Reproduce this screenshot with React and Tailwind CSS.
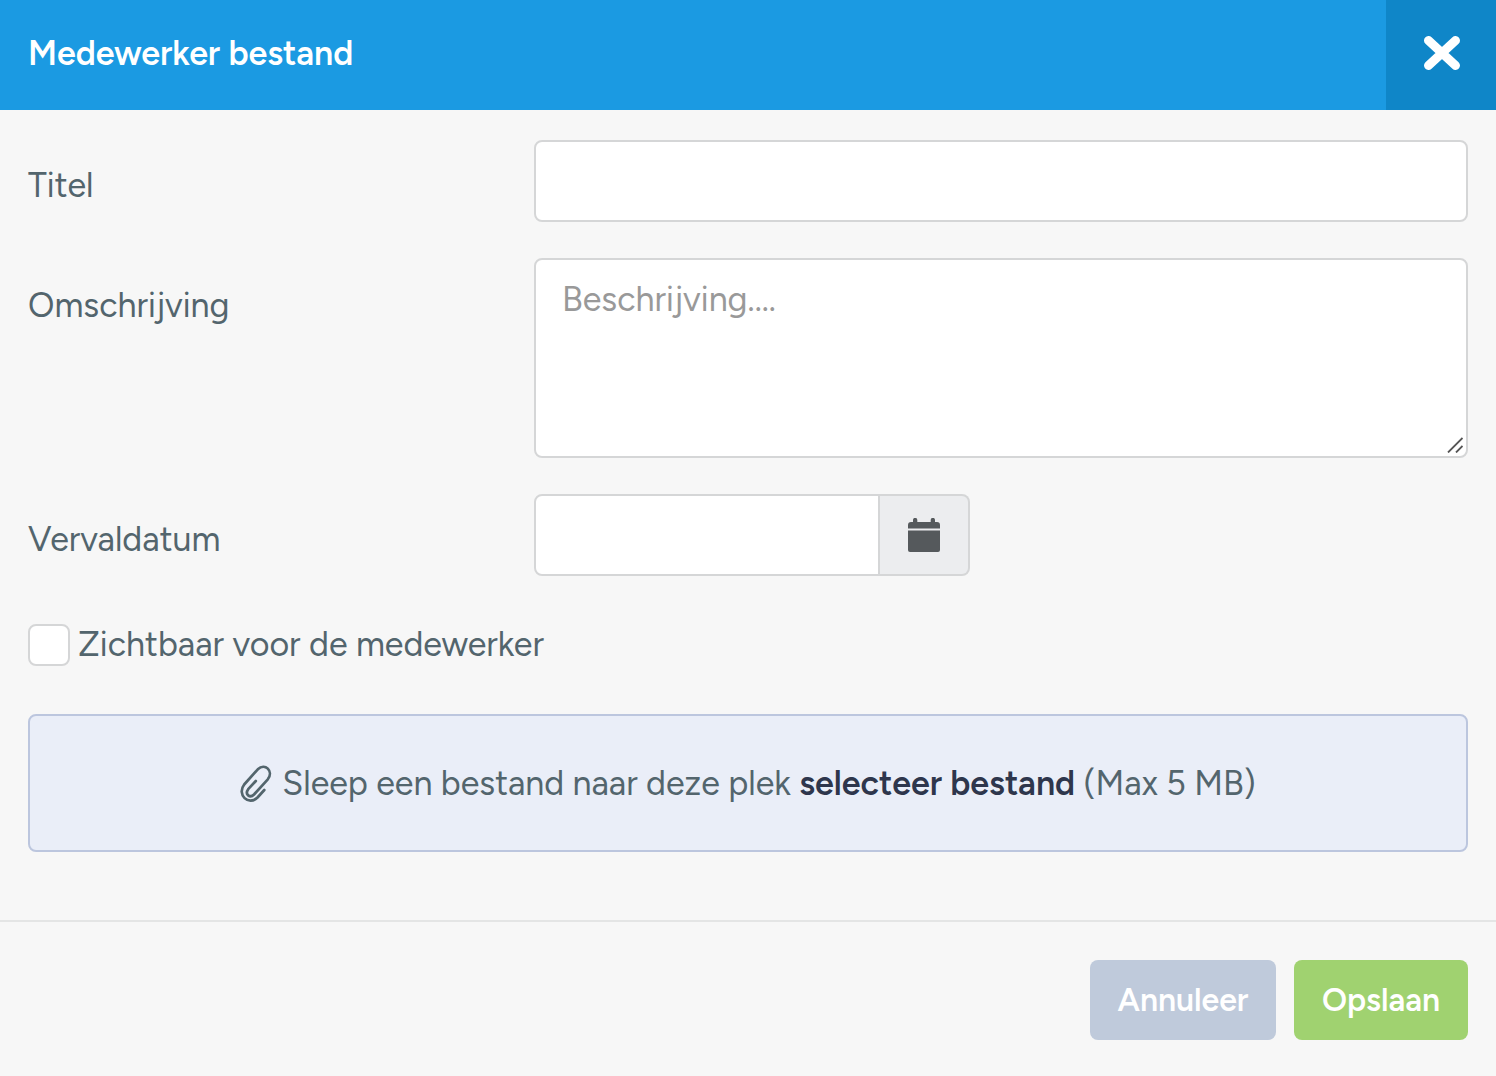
import React from "react";

const label = "w-[506px] shrink-0 text-[34px] leading-10 text-[#53656d]";
const field = "border-2 border-[#d5d6d7] bg-white px-[26px] text-[34px] text-[#53656d] outline-none";
const action = "h-20 rounded-lg text-[32px] leading-10 font-semibold text-white";

function CloseIcon() {
  return (
    <svg viewBox="0 0 36 34" className="h-[34px] w-9" aria-hidden="true">
      <path d="M4.500 4.500 L31.500 29.500 M31.500 4.500 L4.500 29.500" stroke="currentColor" strokeWidth="9" strokeLinecap="round" fill="none" />
    </svg>
  );
}

function CalendarIcon() {
  return (
    <svg viewBox="0 0 32 34" className="h-[34px] w-8" fill="currentColor" aria-hidden="true">
      <path d="M0 10.500V7a3 3 0 0 1 3-3h2V2a2 2 0 0 1 4.300 0v2h13.400V2a2 2 0 0 1 4.300 0v2h2a3 3 0 0 1 3 3v3.500z" />
      <path d="M0 12.500h32V32a2 2 0 0 1-2 2H2a2 2 0 0 1-2-2z" />
    </svg>
  );
}

function PaperclipIcon() {
  return (
    <svg viewBox="0 0 32 38" className="h-[38px] w-8 shrink-0" fill="none" stroke="currentColor" strokeWidth="2.700" strokeLinecap="round" strokeLinejoin="round" aria-hidden="true">
      <path d="M15.800 16 L8.200 24.200 C4.500 29.500 10 33.500 14 29.500 L27.800 14.300 C34 6 25 -2.500 17.800 4.300 L4.200 19.500 C-3.500 29.500 8.500 41.500 17.500 32.500 L24.300 25" />
    </svg>
  );
}

export default function App() {
  return (
    <form className="min-h-screen bg-[#f7f7f7] font-['Figtree','Lato',sans-serif]" onSubmit={(e) => e.preventDefault()}>
      <header className="flex h-[110px] justify-between bg-[#1b9ae2] text-white">
        <h1 className="pt-[34px] pl-7 text-[34px] leading-10 font-semibold">Medewerker bestand</h1>
        <button type="button" aria-label="Sluiten" className="flex w-[110px] items-center justify-center bg-[#0f86c8] pb-1 pl-0.5">
          <CloseIcon />
        </button>
      </header>
      <main className="flex flex-col px-7 pt-[30px] pb-[68px]">
        <div className="flex">
          <label htmlFor="titel" className={`${label} pt-[26px]`}>Titel</label>
          <input id="titel" type="text" className={`${field} h-[82px] min-w-0 grow rounded-lg`} />
        </div>
        <div className="mt-9 flex">
          <label htmlFor="omschrijving" className={`${label} pt-7`}>Omschrijving</label>
          <div className="relative flex min-w-0 grow">
            <textarea id="omschrijving" placeholder="Beschrijving...." className={`${field} h-[200px] min-w-0 grow resize-none rounded-lg pt-5 leading-10 placeholder:text-[#999999]`} />
            <svg viewBox="0 0 16 16" className="pointer-events-none absolute right-[5px] bottom-[5px] size-4" fill="none" stroke="#555555" strokeWidth="1.800" aria-hidden="true">
              <path d="M1 15.500 L15.500 1 M9 15.500 L15.500 9" />
            </svg>
          </div>
        </div>
        <div className="mt-9 flex">
          <label htmlFor="vervaldatum" className={`${label} pt-[26px]`}>Vervaldatum</label>
          <input id="vervaldatum" type="text" className={`${field} h-[82px] w-[346px] min-w-0 rounded-l-lg`} />
          <button type="button" aria-label="Kies datum" className="flex w-[90px] shrink-0 items-center justify-center rounded-r-lg border-2 border-l-0 border-[#d5d6d7] bg-[#ecedef] text-[#55595c]">
            <CalendarIcon />
          </button>
        </div>
        <div className="mt-12 flex h-[42px] items-center gap-2 text-[34px] leading-[42px] text-[#53656d]">
          <input id="zichtbaar" type="checkbox" className="size-[42px] shrink-0 appearance-none rounded-lg border-2 border-[#d5d6d7] bg-white checked:bg-[#1b9ae2]" />
          <label htmlFor="zichtbaar">Zichtbaar voor de medewerker</label>
        </div>
        <div className="mt-12 flex h-[138px] items-center justify-center gap-2.5 rounded-lg border-2 border-[#bcc6de] bg-[#eaeef8] pt-0.5 text-[34px] leading-10 text-[#53656d]">
          <PaperclipIcon />
          <p>
            Sleep een bestand naar deze plek{" "}
            <button type="button" className="font-semibold text-[#2e364c]">selecteer bestand</button> (Max 5 MB)
          </p>
        </div>
      </main>
      <footer className="flex justify-end gap-[18px] border-t-2 border-[#e4e5e5] px-7 pt-[38px] pb-9">
        <button type="button" className={`${action} w-[186px] bg-[#bfcadb]`}>Annuleer</button>
        <button type="submit" className={`${action} w-[174px] bg-[#a0d270]`}>Opslaan</button>
      </footer>
    </form>
  );
}
